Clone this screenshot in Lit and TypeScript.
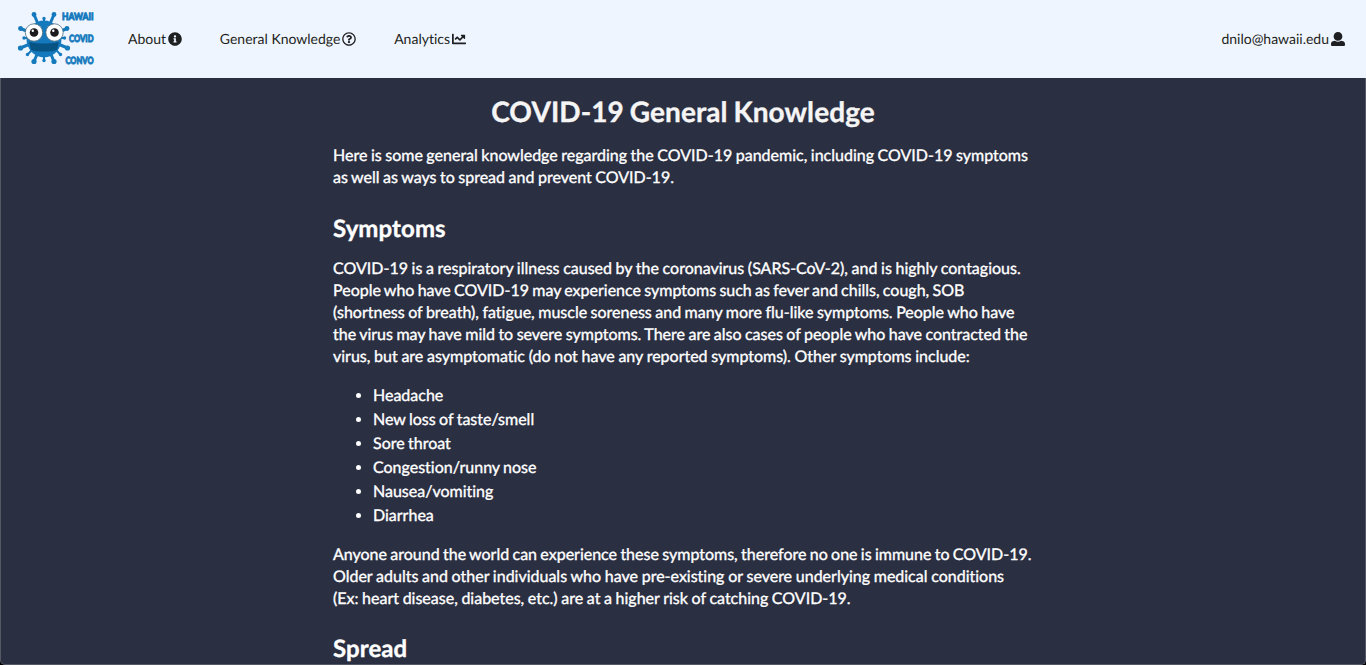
import { LitElement, html, css, svg } from "lit";
import { customElement } from "lit/decorators.js";
import { styleMap } from "lit/directives/style-map.js";

const INFO =
  "M256 8C119.043 8 8 119.083 8 256c0 136.997 111.043 248 248 248s248-111.003 248-248C504 119.083 392.957 8 256 8zm0 110c23.196 0 42 18.804 42 42s-18.804 42-42 42-42-18.804-42-42 18.804-42 42-42zm56 254c0 6.627-5.373 12-12 12h-88c-6.627 0-12-5.373-12-12v-24c0-6.627 5.373-12 12-12h12v-64h-12c-6.627 0-12-5.373-12-12v-24c0-6.627 5.373-12 12-12h64c6.627 0 12 5.373 12 12v100h12c6.627 0 12 5.373 12 12v24z";
const QUESTION =
  "M256 8C119.043 8 8 119.083 8 256c0 136.997 111.043 248 248 248s248-111.003 248-248C504 119.083 392.957 8 256 8zm0 448c-110.532 0-200-89.431-200-200 0-110.495 89.472-200 200-200 110.491 0 200 89.471 200 200 0 110.53-89.431 200-200 200zm107.244-255.2c0 67.052-72.421 68.084-72.421 92.863V300c0 6.627-5.373 12-12 12h-45.647c-6.627 0-12-5.373-12-12v-8.659c0-35.745 27.1-50.034 47.579-61.516 17.561-9.845 28.324-16.541 28.324-29.579 0-17.246-21.999-28.693-39.784-28.693-23.189 0-33.894 10.977-48.942 29.969-4.057 5.12-11.46 6.071-16.666 2.124l-27.824-21.098c-5.107-3.872-6.251-11.066-2.644-16.363C184.846 131.491 214.94 112 261.794 112c49.071 0 101.45 38.304 101.45 88.8zM298 368c0 23.159-18.841 42-42 42s-42-18.841-42-42 18.841-42 42-42 42 18.841 42 42z";
const CHART =
  "M496 384H64V80c0-8.84-7.16-16-16-16H16C7.16 64 0 71.16 0 80v336c0 17.67 14.33 32 32 32h464c8.84 0 16-7.16 16-16v-32c0-8.84-7.16-16-16-16zM464 96H345.94c-21.38 0-32.09 25.85-16.97 40.97l32.4 32.4L288 242.75l-73.37-73.37c-12.5-12.5-32.76-12.5-45.25 0l-68.69 68.69c-6.25 6.25-6.25 16.38 0 22.63l22.62 22.62c6.25 6.25 16.38 6.25 22.63 0L192 237.25l73.37 73.37c12.5 12.5 32.76 12.5 45.25 0l96-96 32.4 32.4c15.12 15.12 40.97 4.41 40.97-16.97V112c.01-8.84-7.15-16-15.99-16z";
const USER =
  "M256 0c88.366 0 160 71.634 160 160s-71.634 160-160 160S96 248.366 96 160 167.634 0 256 0zm183.283 333.821l-71.313-17.828c-74.923 53.89-165.738 41.864-223.94 0l-71.313 17.828C29.981 344.505 0 382.903 0 426.955V464c0 26.51 21.49 48 48 48h416c26.51 0 48-21.49 48-48v-37.045c0-44.052-29.981-82.45-72.717-93.134z";

const icon = (d: string) =>
  html`<svg class="icon" viewBox="0 0 512 512" aria-hidden="true"><path d=${d}></path></svg>`;

// Each spike runs from the body centre to a rounded knob: [x, y, knob radius]
const SPIKES: [number, number, number][] = [
  [17, 3.5, 2.4], [37, 3.5, 2.4],
  [3.5, 17.5, 2.4], [50, 17.5, 2.4],
  [3.5, 37, 2.6], [50.5, 37, 2.6],
  [17, 50.5, 2.6], [37, 50.5, 2.6],
];
const BUMPS: [number, number][] = [
  [27, 7.5], [7, 27], [47.5, 27], [10.5, 43.5], [27, 49.5], [43.5, 43.5],
];

@customElement("covid-logo")
export class CovidLogo extends LitElement {
  static styles = css`
    :host { display: block; width: 78px; height: 56px; }
    .art { display: block; width: 78px; height: 56px; overflow: visible; }
    .word { font: 900 10px Lato, sans-serif; fill: #1479bd; stroke: #1479bd; stroke-width: 0.9; }
  `;
  render() {
    return html`<svg class="art" viewBox="0 0 78 56" role="img" aria-label="Hawaii Covid Convo">
      ${SPIKES.map(
        ([x, y, r]) => svg`<path d="M27 27L${x} ${y}" stroke="#1479bd" stroke-width="3"></path>
          <circle cx=${x} cy=${y} r=${r} fill="#1479bd"></circle>`
      )}
      ${BUMPS.map(
        ([x, y]) => svg`<path d="M27 27L${x} ${y}" stroke="#1479bd" stroke-width="2"></path>
          <circle cx=${x} cy=${y} r="1.7" fill="#1479bd"></circle>`
      )}
      <ellipse cx="27" cy="28" rx="17.5" ry="18.5" fill="#1479bd"></ellipse>
      <path d="M12 31Q27 34 42 31L40 39Q34 41 27 40.500Q20 41 14 39Z" fill="#075384"></path>
      <circle cx="17" cy="21.500" r="8.700" fill="#fff" stroke="#48697c" stroke-width="0.8"></circle>
      <circle cx="37.500" cy="21.500" r="8.700" fill="#fff" stroke="#48697c" stroke-width="0.8"></circle>
      <circle cx="17" cy="21.500" r="4.300" fill="#1b1a1c"></circle>
      <circle cx="37.500" cy="21.500" r="4.300" fill="#1b1a1c"></circle>
      <circle cx="15.800" cy="19.800" r="1.200" fill="#fff"></circle>
      <circle cx="36.300" cy="19.800" r="1.200" fill="#fff"></circle>
      <text class="word" x="45" y="8.500" textLength="31.500" lengthAdjust="spacingAndGlyphs">HAWAII</text>
      <text class="word" x="52" y="30.500" textLength="24.500" lengthAdjust="spacingAndGlyphs">COVID</text>
      <text class="word" x="48.500" y="52.500" textLength="28" lengthAdjust="spacingAndGlyphs">CONVO</text>
    </svg>`;
  }
}

// A line of copy and the adjustment of its word gaps, in pixels
type Line = [string, number];

const INTRO: Line[] = [
  ["Here is some general knowledge regarding the COVID-19 pandemic, including COVID-19 symptoms", -0.55],
  ["as well as ways to spread and prevent COVID-19.", -0.56],
];
const ILLNESS: Line[] = [
  ["COVID-19 is a respiratory illness caused by the coronavirus (SARS-CoV-2), and is highly contagious.", -0.46],
  ["People who have COVID-19 may experience symptoms such as fever and chills, cough, SOB", -0.85],
  ["(shortness of breath), fatigue, muscle soreness and many more flu-like symptoms. People who have", -0.6],
  ["the virus may have mild to severe symptoms. There are also cases of people who have contracted the", -0.65],
  ["virus, but are asymptomatic (do not have any reported symptoms). Other symptoms include:", -0.4],
];
const RISK: Line[] = [
  ["Anyone around the world can experience these symptoms, therefore no one is immune to COVID-19.", -0.77],
  ["Older adults and other individuals who have pre-existing or severe underlying medical conditions", -0.37],
  ["(Ex: heart disease, diabetes, etc.) are at a higher risk of catching COVID-19.", -0.46],
];
const SYMPTOMS = [
  "Headache", "New loss of taste/smell", "Sore throat",
  "Congestion/runny nose", "Nausea/vomiting", "Diarrhea",
];

const paragraph = (lines: Line[]) =>
  html`<p class="text">${lines.map(
    ([text, gap]) => html`<span class="line" style=${styleMap({ wordSpacing: `${gap}px` })}>${text}</span>`
  )}</p>`;

@customElement("app-root")
export class AppRoot extends LitElement {
  static styles = css`
    :host {
      display: flex; flex-direction: column; box-sizing: border-box;
      height: 665px; overflow: hidden; background: #000;
      font-family: Lato, sans-serif; font-size: 16px; line-height: 22px; color: #fff;
      text-rendering: geometricPrecision; font-variant-ligatures: none;
    }
    .nav {
      flex: none; display: flex; align-items: center; height: 78px; box-sizing: border-box;
      padding: 0 20px 0 17px; background: #eef5ff; color: #1e1f20;
      font-size: 14px; line-height: 20px;
    }
    .logo { margin-top: -1px; }
    .item { display: flex; align-items: center; white-space: nowrap; }
    .about { margin-left: 33px; }
    .item + .item { margin-left: 36.75px; }
    .nav .item.user { margin-left: auto; }
    .icon { width: 14px; height: 14px; margin: 0 1.25px 0 1.75px; fill: currentColor; flex: none; }
    .page {
      flex: 1; min-height: 0; overflow: hidden; box-sizing: border-box; background: #2b2f42;
      border: 1px solid #555865; border-top: 0; border-radius: 0 0 5px 5px;
    }
    .content { width: 700px; margin: 0 auto; white-space: nowrap; font-weight: 400; -webkit-text-stroke: 0.35px currentColor; }
    .title, .heading { font-weight: 700; margin: 0; letter-spacing: 0.08px; }
    .title { padding-top: 15px; font-size: 28px; line-height: 36px; text-align: center; color: #f5f5f5; word-spacing: -1px; }
    .heading { font-size: 24px; line-height: 30px; margin: 25px 0 14px; }
    .text { margin: 0; }
    .line { display: block; }
    .title + .text { margin-top: 16px; }
    .list { margin: 16px 0; padding: 0 0 0 40px; line-height: 24px; word-spacing: -0.7px; }
    .list + .text + .heading { margin-top: 24px; }
  `;
  render() {
    return html`
      <nav class="nav">
        <covid-logo class="logo"></covid-logo>
        <a class="item about"><span>About</span>${icon(INFO)}</a>
        <a class="item"><span>General Knowledge</span>${icon(QUESTION)}</a>
        <a class="item"><span>Analytics</span>${icon(CHART)}</a>
        <a class="item user"><span>dnilo@hawaii.edu</span>${icon(USER)}</a>
      </nav>
      <main class="page">
        <div class="content">
          <h1 class="title">COVID-19 General Knowledge</h1>
          ${paragraph(INTRO)}
          <h2 class="heading">Symptoms</h2>
          ${paragraph(ILLNESS)}
          <ul class="list">${SYMPTOMS.map((s) => html`<li>${s}</li>`)}</ul>
          ${paragraph(RISK)}
          <h2 class="heading">Spread</h2>
        </div>
      </main>
    `;
  }
}
